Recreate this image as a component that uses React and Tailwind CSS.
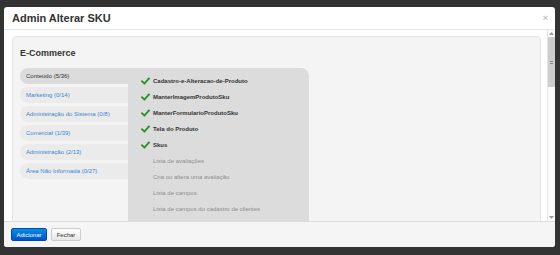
import { useState } from 'react';

const Check = () => (
    <svg width="9" height="8" viewBox="0 0 9 8" className="shrink-0">
        <path d="M1 4.2 L3.4 6.6 L8 1.4" fill="none" stroke="#2b9a2b" strokeWidth="2" strokeLinecap="round" strokeLinejoin="round" />
    </svg>
);

const App = () => {
    const [active] = useState(0);

    const groups = [
        'Conteúdo (5/36)',
        'Marketing (0/14)',
        'Administração do Sistema (0/8)',
        'Comercial (1/39)',
        'Administração (2/13)',
        'Área Não Informada (0/27)'
    ];

    const items = [
        { label: 'Cadastro-e-Alteracao-de-Produto', on: true },
        { label: 'ManterImagemProdutoSku', on: true },
        { label: 'ManterFormularioProdutoSku', on: true },
        { label: 'Tela do Produto', on: true },
        { label: 'Skus', on: true },
        { label: 'Lista de avaliações', on: false },
        { label: 'Cria ou altera uma avaliação', on: false },
        { label: 'Lista de campos', on: false },
        { label: 'Lista de campos do cadastro de clientes', on: false },
        { label: 'Cria ou altera um campo do cadastro de clientes', on: false }
    ];

    return (
        <div className="w-[560px] h-[255px] bg-[#333333] pt-[7px] pl-[4px] overflow-hidden" style={{ fontFamily: '"Liberation Sans", Arial, sans-serif' }}>
            <div className="w-[551px] h-[240px] bg-white rounded-[3px] flex flex-col overflow-hidden">
                {/* Header */}
                <div className="h-[23px] shrink-0 border-b border-[#e8e8e8] flex items-center justify-between pl-[8px] pr-[7px] pt-[1px]">
                    <h3 className="text-[11px] font-bold text-[#333] leading-none">Admin Alterar SKU</h3>
                    <span className="text-[9px] font-bold text-[#c4c4c4] leading-none">×</span>
                </div>

                {/* Body */}
                <div className="flex-1 flex min-h-0 overflow-hidden">
                    <div className="flex-1 pl-[8px] pr-[6px] pt-[6px] overflow-hidden">
                        <div className="h-[260px] bg-[#f4f4f4] border border-[#e4e4e4] rounded-[4px] px-[7px] pt-[12px]">
                            <h4 className="text-[9px] font-bold text-[#333] leading-none">E-Commerce</h4>
                            <div className="mt-[10px] flex">
                                <div className="w-[108px] flex flex-col gap-[3px]">
                                    {groups.map((g, i) => (
                                        <div
                                            key={i}
                                            className={`h-[16px] flex items-center pl-[6px] rounded-l-[8px] text-[6px] ${i === active ? 'bg-[#dcdcdc] text-[#333]' : 'bg-[#ebebeb] text-[#3a86cf]'}`}
                                        >
                                            {g}
                                        </div>
                                    ))}
                                </div>
                                <div className="w-[181px] h-[200px] bg-[#dcdcdc] rounded-tr-[8px] pl-[13px] pt-[5px]">
                                    {items.map((it, i) => (
                                        <div key={i} className="h-[16px] flex items-center">
                                            {it.on ? <Check /> : <span className="w-[9px] shrink-0" />}
                                            <span className={`ml-[3px] text-[6px] ${it.on ? 'font-bold text-[#333]' : 'text-[#8e8e8e]'}`}>{it.label}</span>
                                        </div>
                                    ))}
                                </div>
                            </div>
                        </div>
                    </div>

                    {/* Scrollbar */}
                    <div className="w-[8px] shrink-0 bg-[#fbfbfb] border-l border-[#e6e6e6] flex flex-col">
                        <div className="h-[7px] flex items-center justify-center">
                            <svg width="5" height="3" viewBox="0 0 5 3"><path d="M0 3 L2.5 0 L5 3 Z" fill="#9a9a9a" /></svg>
                        </div>
                        <div className="h-[50px] bg-[#cdcdcd] flex items-center justify-center">
                            <div className="w-[3px] h-[3px] border-y border-[#888]" />
                        </div>
                        <div className="flex-1" />
                        <div className="h-[7px] flex items-center justify-center">
                            <svg width="5" height="3" viewBox="0 0 5 3"><path d="M0 0 L2.5 3 L5 0 Z" fill="#9a9a9a" /></svg>
                        </div>
                    </div>
                </div>

                {/* Footer */}
                <div className="h-[26px] shrink-0 bg-[#f5f5f5] border-t border-[#dddddd] flex items-center gap-[4px] pl-[7px]">
                    <button className="w-[36px] h-[13px] rounded-[2px] text-[6px] text-white bg-gradient-to-b from-[#0a8ee0] to-[#0052cc] border border-[#0046b8] leading-none">
                        Adicionar
                    </button>
                    <button className="w-[30px] h-[13px] rounded-[2px] text-[6px] text-[#333] bg-gradient-to-b from-white to-[#e6e6e6] border border-[#cccccc] leading-none">
                        Fechar
                    </button>
                </div>
            </div>
        </div>
    );
};

export default App;
